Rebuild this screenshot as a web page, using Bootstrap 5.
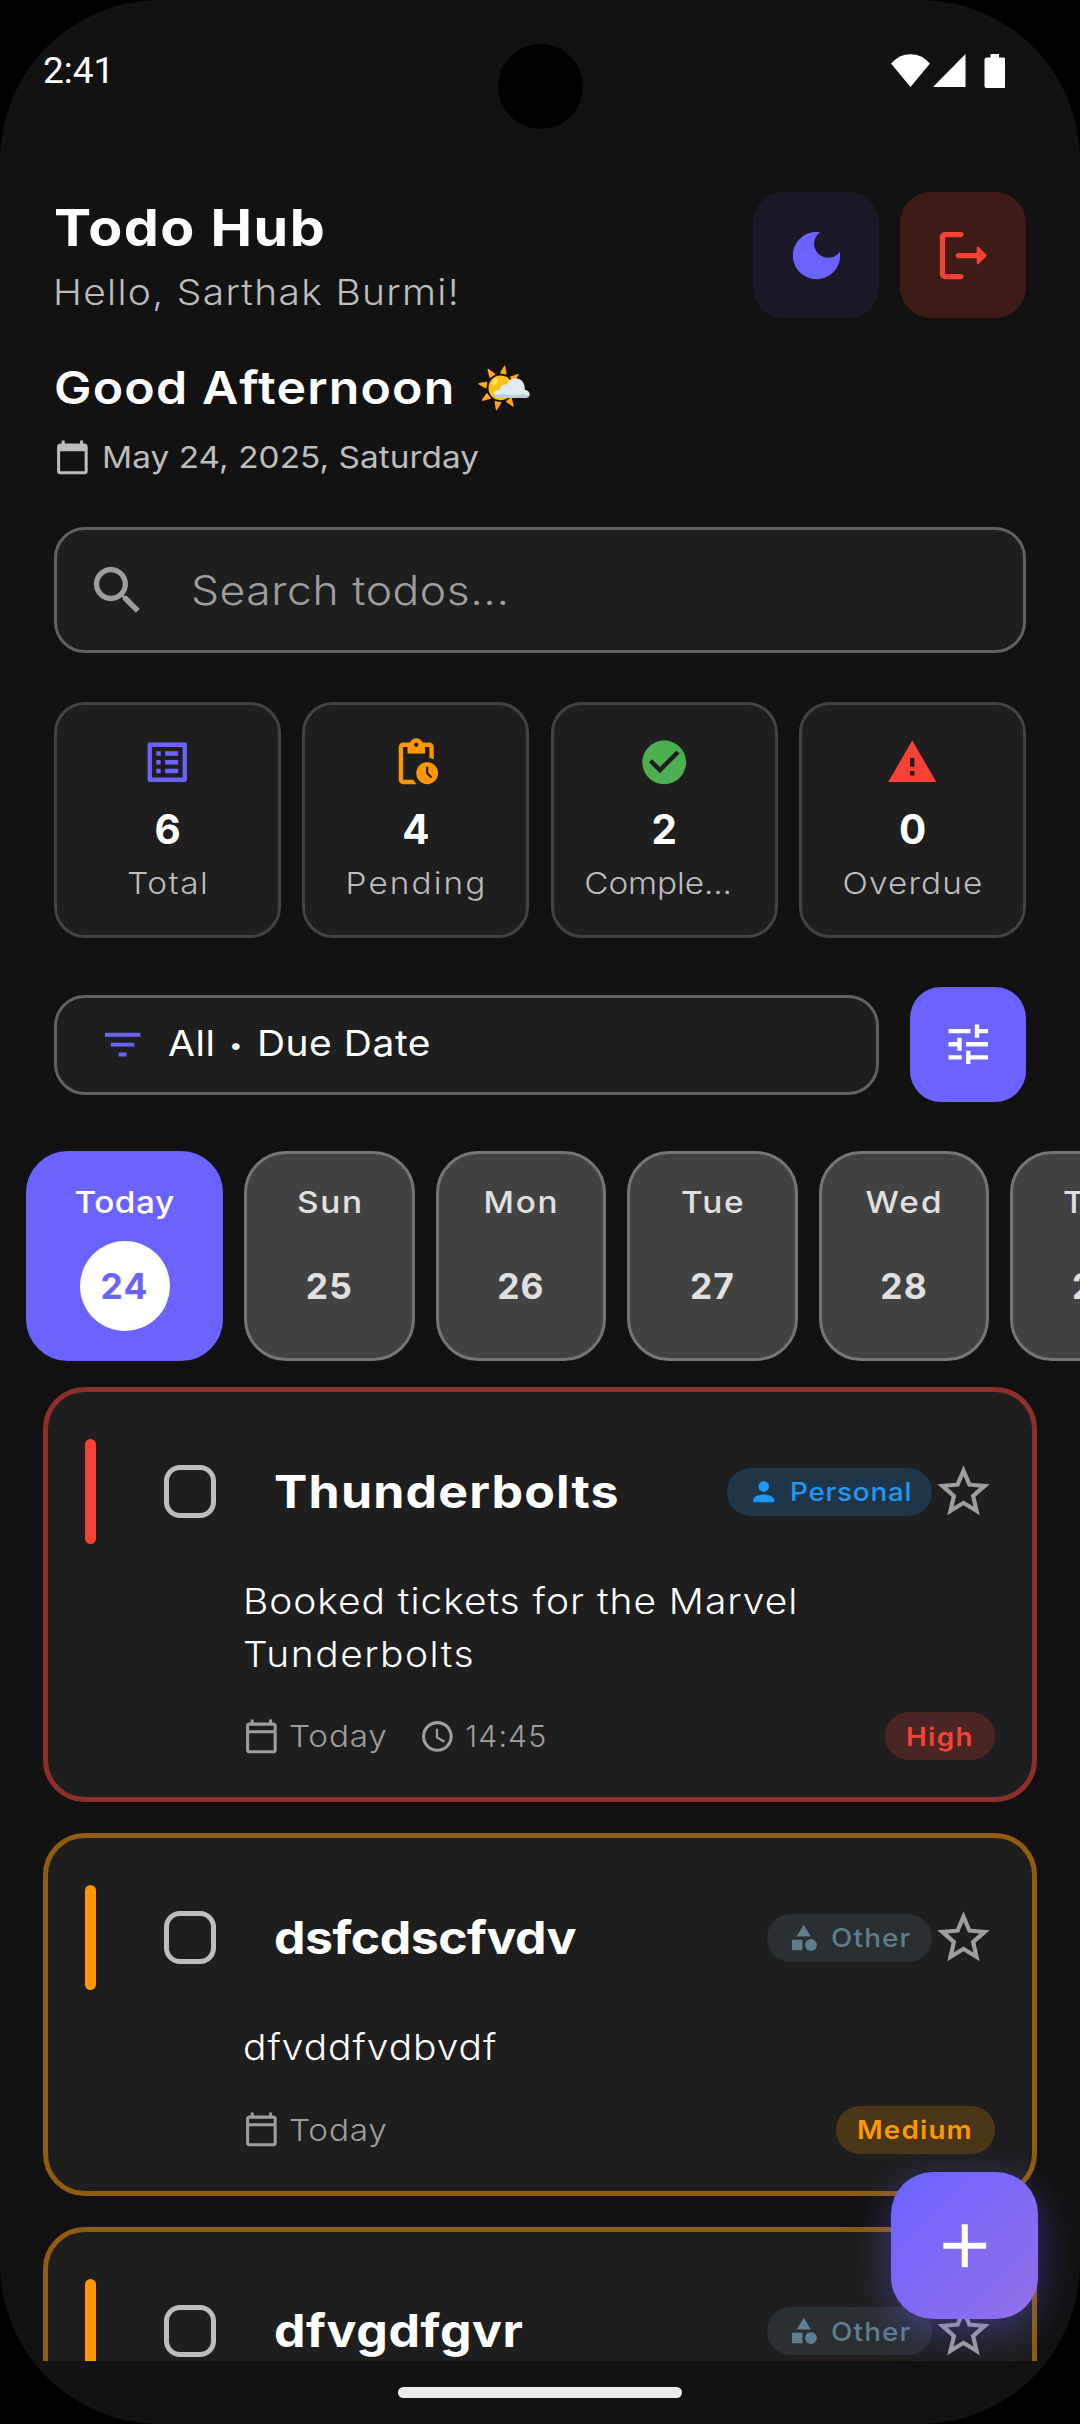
<!doctype html>
<html lang="en">
<head>
<meta charset="utf-8">
<meta name="viewport" content="width=device-width, initial-scale=1">
<title>Todo Hub</title>
<link href="https://cdn.jsdelivr.net/npm/bootstrap@5.3.0/dist/css/bootstrap.min.css" rel="stylesheet">
<style>
  body{background:#000;color:#fff;font-family:Inter,"Noto Sans",sans-serif;overflow:hidden}
  .phone{width:1080px;height:2424px;background:#121212;border-radius:160px}
  .phone svg{display:block;fill:currentColor;flex:none}

  /* status bar */
  .statusbar{height:192px;padding:47px 75px 0 43px}
  .clock-now{font:400 37px/48px Roboto,sans-serif}
  .status-icons{margin-top:7px}
  .camera{width:85px;height:85px;background:#000;left:497.5px;top:44px}

  /* type: a widened geometric look; --ls is the tracking */
  .sp{display:inline-block;letter-spacing:var(--ls);margin-right:calc(var(--ls) * -1);white-space:nowrap;transform:scaleX(1.1);transform-origin:left center}
  .sp-mid{transform-origin:center}
  .plain{letter-spacing:1.1px;white-space:nowrap}
  .sp20{font-size:50.6px;line-height:64px}
  .sp18{font-size:45.5px;line-height:58px}
  .sp16{font-size:40.4px;line-height:48px}
  .sp14{font-size:35.4px;line-height:46px}
  .sp12{font-size:30.3px;line-height:38px}
  .sp10{font-size:25.3px;line-height:32px}
  .w3{font-weight:300}.w4{font-weight:400}.w5{font-weight:500}.w6{font-weight:600}.w7{font-weight:700}
  .soft{color:#bdbdbd}.dim{color:#9e9e9e}.accent{color:#6c63ff}
  .ls-n5{--ls:-.5px}.ls-n1{--ls:-.1px}.ls-01{--ls:.06px}.ls-05{--ls:.5px}.ls-07{--ls:.7px}.ls-09{--ls:.88px}
  .ls-10{--ls:1.05px}.ls-12{--ls:1.2px}.ls-13{--ls:1.32px}.ls-16{--ls:1.6px}.ls-19{--ls:1.9px}

  .gutter{margin-left:54px;margin-right:54px}
  .header-row{height:126px}
  .hello{margin-top:10px;margin-left:-1px}
  .sq-btn{width:126px;height:126px;border-radius:31px}
  .btn-theme{background:#1b1928;color:#6c63ff}
  .btn-exit{background:#3f1b18;color:#f44336}
  .greeting{margin-top:41px;height:58px}
  .emoji{font:46.5px/58px "Noto Color Emoji",sans-serif;margin-left:57px}
  .date-row{margin-top:20px;height:40px;gap:11px;margin-bottom:50px}
  .panel{background:#1e1e1e;border:3px solid #616161;border-radius:31px}
  .search-box{height:126px;padding-left:29px;margin-bottom:49px}
  .search-box .sp{margin-left:42px;margin-top:2px}
  .stats{gap:21.3px;height:236px;margin-bottom:49px}
  .stat{border-color:#424242;padding-top:31px;flex:1 1 0}
  .stat .num{margin-top:17px;line-height:48px}
  .stat .lbl{margin-top:10px}
  .clip-lbl{position:relative;left:-6px}
  .filters{height:115px;margin-bottom:49px}
  .filter-box{height:100px;width:825px;padding-left:42px;gap:21.5px}
  .bullet{font-size:.62em;vertical-align:.18em;margin:0 2px}
  .tune-btn{width:116px;height:115px;border-radius:31px;background:#6c63ff;color:#fff}

  .days{height:210px;padding-left:26px;gap:21px;margin-bottom:26px;overflow:hidden}
  .day{flex:none;width:170.6px;height:210px;border-radius:42px;background:#424242;border:3px solid #757575;color:#e0e0e0;padding-top:28.5px}
  .day.active{width:197px;background:#6c63ff;border-color:#6c63ff;color:#fff}
  .day .dot{width:90px;height:90px;margin-top:20.5px}
  .day .dot span{padding-top:1px}
  .day.active .dot{background:#fff;color:#6c63ff}

  .todos{height:974px;overflow:hidden;padding:0 43px;gap:31px}
  .todo{flex:none;background:#1e1e1e;border:5px solid;border-radius:42px;padding:47px 37px 37px}
  .todo.high{border-color:#8b302b;--tone:#f44336;--tint:#492523}
  .todo.medium{border-color:#8f5c10;--tone:#ff9800;--tint:#4b3618}
  .todo.cut{height:362px}
  .strip{width:10.5px;height:105px;border-radius:6px;background:var(--tone)}
  .tick{width:52.5px;height:52.5px;border:5px solid #bdbdbd;border-radius:16px;margin:0 57.5px 0 68px}
  .desc{display:block;margin:32px 0 31px 157.5px;line-height:52.5px}
  .desc .wide{letter-spacing:1.36px}
  .meta{height:48px;margin-left:158px;gap:9.6px}
  .meta .later{margin-left:31px}
  .tag{height:48px;border-radius:24px;padding-left:21px;gap:11px}
  .tag .sp{margin-top:1px}
  .tag-personal{width:205.5px;background:#1f3548;color:#2196f3}
  .tag-other{width:165px;background:#2a2f32;color:#607d8b}
  .tag-level{background:var(--tint);color:var(--tone)}
  .tag-level.lv-high{width:110px}
  .tag-level.lv-medium{width:159px}

  .home-bar{height:63px}
  .home-bar div{width:284px;height:11px;background:#ececec}
  .fab{width:147px;height:147px;right:42px;top:2172px;border-radius:42px;color:#fff;background:linear-gradient(135deg,#6c63ff,#9370e8);box-shadow:0 10px 40px rgba(108,99,255,.4)}
</style>
<script src="https://cdn.jsdelivr.net/npm/bootstrap@5.3.0/dist/js/bootstrap.bundle.min.js"></script>
</head>
<body>
<svg class="d-none" xmlns="http://www.w3.org/2000/svg">
  <symbol id="moon" viewBox="0 0 24 24"><path d="M12 3c-4.97 0-9 4.03-9 9s4.03 9 9 9 9-4.03 9-9c0-.46-.04-.92-.1-1.36-.98 1.37-2.58 2.26-4.4 2.26-2.98 0-5.4-2.42-5.4-5.4 0-1.81.89-3.42 2.26-4.4-.44-.06-.9-.1-1.36-.1z"/></symbol>
  <symbol id="logout" viewBox="0 0 24 24"><path d="M5 5h6c.55 0 1-.45 1-1s-.45-1-1-1H5c-1.1 0-2 .9-2 2v14c0 1.1.9 2 2 2h6c.55 0 1-.45 1-1s-.45-1-1-1H5V5z"/><path d="M20.65 11.65l-2.79-2.79c-.32-.32-.86-.1-.86.35V11h-7c-.55 0-1 .45-1 1s.45 1 1 1h7v1.79c0 .45.54.67.85.35l2.79-2.79c.2-.19.2-.51.01-.7z"/></symbol>
  <symbol id="cal-filled" viewBox="0 0 24 24"><path d="M20 3h-1V1h-2v2H7V1H5v2H4c-1.1 0-2 .9-2 2v16c0 1.1.9 2 2 2h16c1.1 0 2-.9 2-2V5c0-1.1-.9-2-2-2zm0 18H4V8h16v13z"/></symbol>
  <symbol id="cal" viewBox="0 0 24 24"><path d="M20 3h-1V1h-2v2H7V1H5v2H4c-1.1 0-2 .9-2 2v16c0 1.1.9 2 2 2h16c1.1 0 2-.9 2-2V5c0-1.1-.9-2-2-2zm0 18H4V10h16v11zm0-13H4V5h16v3z"/></symbol>
  <symbol id="search" viewBox="0 0 24 24"><path d="M15.5 14h-.79l-.28-.27C15.41 12.59 16 11.11 16 9.5 16 5.91 13.09 3 9.5 3S3 5.91 3 9.5 5.91 16 9.5 16c1.61 0 3.09-.59 4.23-1.57l.27.28v.79l5 4.99L20.49 19l-4.99-5zm-6 0C7.01 14 5 11.99 5 9.5S7.01 5 9.5 5 14 7.01 14 9.5 11.99 14 9.5 14z"/></symbol>
  <symbol id="list" viewBox="0 0 24 24"><path d="M19 5v14H5V5h14m1.1-2H3.9c-.5 0-.9.4-.9.9v16.2c0 .4.4.9.9.9h16.2c.4 0 .9-.5.9-.9V3.9c0-.5-.5-.9-.9-.9zM11 7h6v2h-6V7zm0 4h6v2h-6v-2zm0 4h6v2h-6zM7 7h2v2H7zm0 4h2v2H7zm0 4h2v2H7z"/></symbol>
  <symbol id="pending" viewBox="0 0 24 24"><path d="M17 12c-2.76 0-5 2.24-5 5s2.24 5 5 5 5-2.24 5-5-2.24-5-5-5zm1.65 7.35L16.5 17.2V14h1v2.79l1.85 1.85-.7.71zM18 3h-3.18C14.4 1.84 13.3 1 12 1s-2.4.84-2.82 2H6c-1.1 0-2 .9-2 2v15c0 1.1.9 2 2 2h6.11c-.59-.57-1.07-1.25-1.42-2H6V5h2v3h8V5h2v5.08c.71.1 1.38.31 2 .6V5c0-1.1-.9-2-2-2zm-6 2c-.55 0-1-.45-1-1s.45-1 1-1 1 .45 1 1-.45 1-1 1z"/></symbol>
  <symbol id="check" viewBox="0 0 24 24"><path d="M12 2C6.48 2 2 6.48 2 12s4.48 10 10 10 10-4.48 10-10S17.52 2 12 2zm-2 15l-5-5 1.41-1.41L10 14.17l7.59-7.59L19 8l-9 9z"/></symbol>
  <symbol id="warn" viewBox="0 0 24 24"><path d="M1 21h22L12 2 1 21zm12-3h-2v-2h2v2zm0-4h-2v-4h2v4z"/></symbol>
  <symbol id="filter" viewBox="0 0 24 24"><path d="M10 18h4v-2h-4v2zM3 6v2h18V6H3zm3 7h12v-2H6v2z"/></symbol>
  <symbol id="tune" viewBox="0 0 24 24"><path d="M3 17v2h6v-2H3zM3 5v2h10V5H3zm10 16v-2h8v-2h-8v-2h-2v6h2zM7 9v2H3v2h4v2h2V9H7zm14 4v-2H11v2h10zm-6-4h2V7h4V5h-4V3h-2v6z"/></symbol>
  <symbol id="person" viewBox="0 0 24 24"><path d="M12 12c2.21 0 4-1.79 4-4s-1.79-4-4-4-4 1.79-4 4 1.79 4 4 4zm0 2c-2.67 0-8 1.34-8 4v2h16v-2c0-2.66-5.33-4-8-4z"/></symbol>
  <symbol id="shapes" viewBox="0 0 24 24"><path d="M12 2l-5.5 9h11z"/><circle cx="17.5" cy="17.5" r="4.5"/><path d="M3 13.5h8v8H3z"/></symbol>
  <symbol id="star" viewBox="0 0 24 24"><path d="M22 9.24l-7.19-.62L12 2 9.19 8.63 2 9.24l5.46 4.73L5.82 21 12 17.27 18.18 21l-1.63-7.03L22 9.24zM12 15.4l-3.76 2.27 1-4.28-3.32-2.88 4.38-.38L12 6.1l1.71 4.04 4.38.38-3.32 2.88 1 4.28L12 15.4z"/></symbol>
  <symbol id="time" viewBox="0 0 24 24"><path d="M11.99 2C6.47 2 2 6.48 2 12s4.47 10 9.99 10C17.52 22 22 17.52 22 12S17.52 2 11.99 2zM12 20c-4.42 0-8-3.58-8-8s3.58-8 8-8 8 3.58 8 8-3.58 8-8 8zm.5-13H11v6l5.25 3.15.75-1.23-4.5-2.67z"/></symbol>
  <symbol id="plus" viewBox="0 0 24 24"><path d="M19 13h-6v6h-2v-6H5v-2h6V5h2v6h6v2z"/></symbol>
</svg>

<div class="phone position-relative overflow-hidden d-flex flex-column">
  <div class="statusbar d-flex justify-content-between align-items-start">
    <span class="clock-now">2:41</span>
    <svg class="status-icons" width="114" height="34" viewBox="0 0 114 34"><path d="M19.500 33 0 9.500Q8 .2 19.500.2T39 9.500Z"/><path d="M74.500 0V33H42Z"/><path d="M99.500 0h8.500v3.500h4q2.500 0 2.500 2.500v26q0 2-2 2H95.500q-2 0-2-2V6q0-2.500 2.500-2.500h3.500Z"/></svg>
  </div>
  <div class="camera position-absolute rounded-circle"></div>

  <header class="header-row gutter d-flex justify-content-between">
    <div class="pt-1 d-flex flex-column align-items-start">
      <div class="sp sp20 w7 ls-13">Todo Hub</div>
      <div class="hello sp sp14 w3 ls-12 soft">Hello, Sarthak Burmi!</div>
    </div>
    <div class="d-flex" style="gap:21px">
      <div class="sq-btn btn-theme d-flex align-items-center justify-content-center"><svg width="63" height="63"><use href="#moon"/></svg></div>
      <div class="sq-btn btn-exit d-flex align-items-center justify-content-center"><svg width="63" height="63"><use href="#logout"/></svg></div>
    </div>
  </header>

  <div class="greeting gutter d-flex"><span class="sp sp18 w6 ls-10">Good Afternoon</span><span class="emoji">🌤️</span></div>
  <div class="date-row gutter d-flex align-items-center soft"><svg width="36.750" height="36.750"><use href="#cal-filled"/></svg><span class="sp sp12 w4 ls-01">May 24, 2025, Saturday</span></div>

  <div class="panel search-box gutter d-flex align-items-center dim"><svg width="63" height="63"><use href="#search"/></svg><span class="sp sp16 w3 ls-05">Search todos...</span></div>

  <div class="stats gutter d-flex">
    <div class="panel stat d-flex flex-column align-items-center"><svg class="accent" width="52.500" height="52.500"><use href="#list"/></svg><div class="num sp16 w7">6</div><div class="lbl sp sp-mid sp12 w3 soft ls-13">Total</div></div>
    <div class="panel stat d-flex flex-column align-items-center"><svg color="#ff9800" width="52.500" height="52.500"><use href="#pending"/></svg><div class="num sp16 w7">4</div><div class="lbl sp sp-mid sp12 w3 soft ls-19">Pending</div></div>
    <div class="panel stat d-flex flex-column align-items-center"><svg color="#4caf50" width="52.500" height="52.500"><use href="#check"/></svg><div class="num sp16 w7">2</div><div class="lbl clip-lbl sp sp-mid sp12 w3 soft ls-n1">Comple...</div></div>
    <div class="panel stat d-flex flex-column align-items-center"><svg color="#f44336" width="52.500" height="52.500"><use href="#warn"/></svg><div class="num sp16 w7">0</div><div class="lbl sp sp-mid sp12 w3 soft ls-10">Overdue</div></div>
  </div>

  <div class="filters gutter d-flex align-items-center justify-content-between">
    <div class="panel filter-box d-flex align-items-center"><svg class="accent" width="47.250" height="47.250"><use href="#filter"/></svg><span class="sp sp14 w4 ls-05">All <span class="bullet">•</span> Due Date</span></div>
    <div class="tune-btn d-flex align-items-center justify-content-center"><svg width="52.500" height="52.500"><use href="#tune"/></svg></div>
  </div>

  <div class="days d-flex">
    <div class="day active d-flex flex-column align-items-center"><span class="sp sp-mid sp12 w5 ls-05">Today</span><div class="dot rounded-circle d-flex align-items-center justify-content-center"><span class="plain sp14 w7">24</span></div></div>
    <div class="day d-flex flex-column align-items-center"><span class="sp sp-mid sp12 w5 ls-16">Sun</span><div class="dot d-flex align-items-center justify-content-center"><span class="plain sp14 w7">25</span></div></div>
    <div class="day d-flex flex-column align-items-center"><span class="sp sp-mid sp12 w5 ls-16">Mon</span><div class="dot d-flex align-items-center justify-content-center"><span class="plain sp14 w7">26</span></div></div>
    <div class="day d-flex flex-column align-items-center"><span class="sp sp-mid sp12 w5 ls-16">Tue</span><div class="dot d-flex align-items-center justify-content-center"><span class="plain sp14 w7">27</span></div></div>
    <div class="day d-flex flex-column align-items-center"><span class="sp sp-mid sp12 w5 ls-19">Wed</span><div class="dot d-flex align-items-center justify-content-center"><span class="plain sp14 w7">28</span></div></div>
    <div class="day d-flex flex-column align-items-center"><span class="sp sp-mid sp12 w5 ls-16">Thu</span><div class="dot d-flex align-items-center justify-content-center"><span class="plain sp14 w7">29</span></div></div>
  </div>

  <main class="todos d-flex flex-column">
    <article class="todo high">
      <div class="d-flex align-items-center">
        <div class="strip"></div><div class="tick"></div>
        <span class="sp sp18 w7 ls-10">Thunderbolts</span>
        <div class="tag tag-personal d-flex align-items-center ms-auto"><svg width="31.500" height="31.500"><use href="#person"/></svg><span class="sp sp10 w5 ls-07">Personal</span></div>
        <svg class="dim" width="63" height="63"><use href="#star"/></svg>
      </div>
      <div class="sp sp14 w3 ls-09 desc">Booked tickets for the Marvel<br><span class="wide">Tunderbolts</span></div>
      <div class="meta d-flex align-items-center dim">
        <svg width="36.750" height="36.750"><use href="#cal"/></svg><span class="sp sp12 w3 ls-07">Today</span>
        <svg class="later" width="36.750" height="36.750"><use href="#time"/></svg><span class="plain sp12 w3">14:45</span>
        <div class="tag tag-level lv-high ms-auto d-flex align-items-center"><span class="sp sp10 w6 ls-12">High</span></div>
      </div>
    </article>
    <article class="todo medium">
      <div class="d-flex align-items-center">
        <div class="strip"></div><div class="tick"></div>
        <span class="sp sp18 w7 ls-n5">dsfcdscfvdv</span>
        <div class="tag tag-other d-flex align-items-center ms-auto"><svg width="31.500" height="31.500"><use href="#shapes"/></svg><span class="sp sp10 w5 ls-10">Other</span></div>
        <svg class="dim" width="63" height="63"><use href="#star"/></svg>
      </div>
      <div class="sp sp14 w3 ls-09 desc">dfvddfvdbvdf</div>
      <div class="meta d-flex align-items-center dim">
        <svg width="36.750" height="36.750"><use href="#cal"/></svg><span class="sp sp12 w3 ls-07">Today</span>
        <div class="tag tag-level lv-medium ms-auto d-flex align-items-center"><span class="sp sp10 w6 ls-10">Medium</span></div>
      </div>
    </article>
    <article class="todo medium cut">
      <div class="d-flex align-items-center">
        <div class="strip"></div><div class="tick"></div>
        <span class="sp sp18 w7 ls-05">dfvgdfgvr</span>
        <div class="tag tag-other d-flex align-items-center ms-auto"><svg width="31.500" height="31.500"><use href="#shapes"/></svg><span class="sp sp10 w5 ls-10">Other</span></div>
        <svg class="dim" width="63" height="63"><use href="#star"/></svg>
      </div>
    </article>
  </main>

  <div class="home-bar d-flex align-items-center justify-content-center"><div class="rounded-pill"></div></div>
  <div class="fab position-absolute d-flex align-items-center justify-content-center"><svg width="73.500" height="73.500"><use href="#plus"/></svg></div>
</div>
</body>
</html>
